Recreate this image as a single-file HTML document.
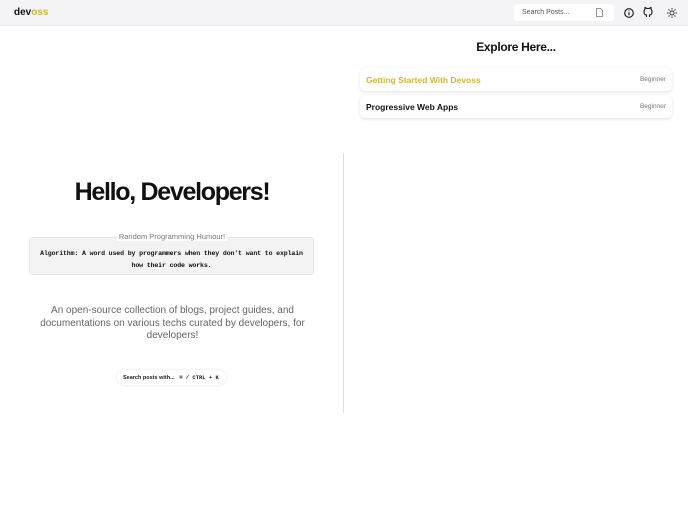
<!DOCTYPE html>
<html><head><style>
*{margin:0;padding:0;box-sizing:border-box}
body{width:688px;height:512px;background:#fff;font-family:"Liberation Sans",sans-serif;position:relative;overflow:hidden}
.hdr{position:absolute;left:0;top:0;width:688px;height:26px;background:#f4f4f6;border-bottom:1px solid #e8e8ea}
.logo{position:absolute;left:14px;top:7px;font-size:10px;font-weight:bold;color:#111}
.logo span{color:#c9b93a}
.search{position:absolute;left:514px;top:4px;width:100px;height:17px;background:#fff;border-radius:3px;font-size:7px;color:#555;padding:5px 0 0 8px}
.card{position:absolute;left:360px;width:312px;height:23px;background:#fff;border-radius:5px;box-shadow:0 1px 3px rgba(0,0,0,.12);font-size:8.5px;font-weight:bold;padding:7px 6px}
.card .b{position:absolute;right:6px;top:8px;font-size:6.5px;color:#777;font-weight:normal}
.div{position:absolute;left:343px;top:153px;width:1px;height:260px;background:#ddd}
h1{position:absolute;left:0;width:344px;top:178px;text-align:center;font-size:25px;font-weight:900;letter-spacing:-1.3px;color:#111}
.box{position:absolute;left:29px;top:237px;width:285px;height:38px;background:#f3f3f3;border:1px solid #e6e6e6;border-radius:4px}
.lbl{position:absolute;left:0;width:344px;top:232px;text-align:center;font-size:7.5px;color:#777}
.lbl span{background:#fff;padding:0 2px}
.joke{position:absolute;left:29px;width:285px;top:248px;text-align:center;font-family:"Liberation Mono",monospace;font-weight:bold;font-size:6.6px;letter-spacing:-.15px;line-height:12px;color:#111;white-space:nowrap}
.desc{position:absolute;left:35px;width:275px;top:305px;text-align:center;font-size:10px;line-height:12.5px;color:#666}
.kbd{position:absolute;left:117px;top:370px;width:109px;height:15px;background:#fff;border-radius:8px;box-shadow:0 0 3px rgba(0,0,0,.1);font-size:5.5px;font-weight:bold;padding:4px 0 0 6px;color:#222}
</style></head><body>
<div class="hdr">
<div class="logo">dev<span>oss</span></div>
<div class="search">Search Posts...
<svg style="position:absolute;left:82px;top:4px" width="7" height="9" viewBox="0 0 7 9"><path d="M.5.5h4l2 2v6h-6z" fill="none" stroke="#777" stroke-width=".8"/></svg></div>
<svg style="position:absolute;left:624px;top:8px" width="10" height="10" viewBox="0 0 10 10"><circle cx="5" cy="5" r="4.3" fill="none" stroke="#111" stroke-width="1.1"/><path d="M5 4.3v3M5 2.5v.8" stroke="#111" stroke-width="1.1"/></svg>
<svg style="position:absolute;left:643px;top:7px" width="10" height="11" viewBox="0 0 10 11"><path d="M3.5 10V8C1 8 1 6 1 4.5 1 3 2 2 2 2V.5l2 1h2l2-1V2s1 1 1 2.5c0 1.5 0 3.5-2.5 3.5v2" fill="none" stroke="#111" stroke-width="1.1"/></svg>
<svg style="position:absolute;left:667px;top:8px" width="10" height="10" viewBox="0 0 10 10"><circle cx="5" cy="5" r="2" fill="none" stroke="#222" stroke-width=".9"/><path d="M5 0v1.5M5 8.5V10M0 5h1.5M8.5 5H10M1.5 1.5l1 1M7.5 7.5l1 1M1.5 8.5l1-1M7.5 2.5l1-1" stroke="#222" stroke-width=".9"/></svg>
</div>
<div style="position:absolute;left:360px;width:312px;top:40px;text-align:center;font-size:12px;font-weight:bold;color:#111;letter-spacing:-.3px">Explore Here...</div>
<div class="card" style="top:68px;color:#c9b93a">Getting Started With Devoss<span class="b">Beginner</span></div>
<div class="card" style="top:95px;color:#111">Progressive Web Apps<span class="b">Beginner</span></div>
<div class="div"></div>
<h1>Hello, Developers!</h1>
<div class="box"></div>
<div class="lbl"><span>Random Programming Humour!</span></div>
<div class="joke">Algorithm: A word used by programmers when they don't want to explain<br>how their code works.</div>
<div class="desc">An open-source collection of blogs, project guides, and documentations on various techs curated by developers, for developers!</div>
<div class="kbd">Search posts with... <span style="font-family:'Liberation Mono',monospace;margin-left:3px">⌘ / CTRL + K</span></div>
</body></html>
